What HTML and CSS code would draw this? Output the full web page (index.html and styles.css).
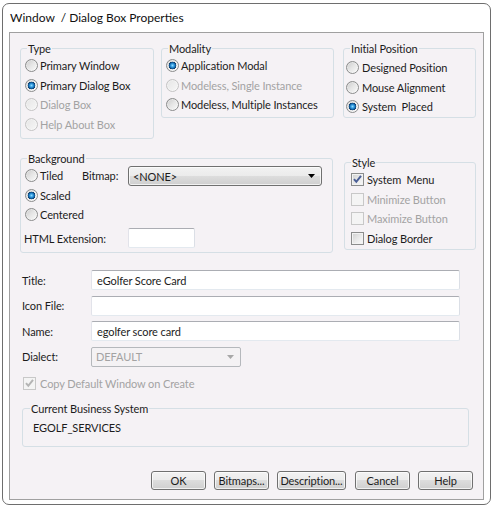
FILE: index.html
```html
<!DOCTYPE html>
<html>
<head>
<meta charset="utf-8">
<title>Window / Dialog Box Properties</title>
<link rel="stylesheet" href="styles.css">
</head>
<body>
<div class="frame">
  <div class="title">Window &nbsp;/ Dialog Box Properties</div>
  <div class="panel">
    <div class="row1">
      <fieldset class="grp grp-type">
        <legend>Type</legend>
        <div class="opt"><span class="radio"></span>Primary Window</div>
        <div class="opt"><span class="radio on"></span>Primary Dialog Box</div>
        <div class="opt dis"><span class="radio"></span>Dialog Box</div>
        <div class="opt dis"><span class="radio"></span>Help About Box</div>
      </fieldset>
      <fieldset class="grp grp-modality">
        <legend>Modality</legend>
        <div class="opt"><span class="radio on"></span>Application Modal</div>
        <div class="opt dis"><span class="radio"></span>Modeless, Single Instance</div>
        <div class="opt"><span class="radio"></span>Modeless, Multiple Instances</div>
      </fieldset>
      <fieldset class="grp grp-init">
        <legend>Initial Position</legend>
        <div class="opt"><span class="radio"></span>Designed Position</div>
        <div class="opt"><span class="radio"></span>Mouse Alignment</div>
        <div class="opt"><span class="radio on"></span>System &nbsp;Placed</div>
      </fieldset>
    </div>
    <div class="row2">
      <fieldset class="grp grp-bg">
        <legend>Background</legend>
        <div class="bg-grid">
          <div class="opt c1 r1"><span class="radio"></span>Tiled</div>
          <div class="lbl c2 r1">Bitmap:</div>
          <div class="combo c3 r1"><span class="combo-text">&lt;NONE&gt;</span><svg class="arrow" width="7" height="4" viewBox="0 0 7 4"><path d="M0 0H7L3.5 4Z"/></svg></div>
          <div class="opt c1 r2"><span class="radio on"></span>Scaled</div>
          <div class="opt c1 r3"><span class="radio"></span>Centered</div>
        </div>
        <div class="html-row">
          <span class="html-lbl">HTML Extension:</span>
          <span class="tb tb-html"></span>
        </div>
      </fieldset>
      <fieldset class="grp grp-style">
        <legend>Style</legend>
        <div class="opt"><span class="cbox"><svg class="check" width="11" height="11" viewBox="0 0 11 11"><path d="M2 5.2L4.3 7.8L9 1.8"/></svg></span>System &nbsp;Menu</div>
        <div class="opt dis"><span class="cbox"></span>Minimize Button</div>
        <div class="opt dis"><span class="cbox"></span>Maximize Button</div>
        <div class="opt"><span class="cbox"></span>Dialog Border</div>
      </fieldset>
    </div>
    <div class="form">
      <div class="frow"><span class="flbl">Title:</span><span class="tb tb-wide">eGolfer Score Card</span></div>
      <div class="frow"><span class="flbl">Icon File:</span><span class="tb tb-wide"></span></div>
      <div class="frow"><span class="flbl">Name:</span><span class="tb tb-wide">egolfer score card</span></div>
      <div class="frow"><span class="flbl">Dialect:</span><span class="dsel"><span>DEFAULT</span><svg class="arrow" width="7" height="4" viewBox="0 0 7 4"><path d="M0 0H7L3.5 4Z"/></svg></span></div>
    </div>
    <div class="copy-row dis"><span class="cbox"><svg class="check" width="11" height="11" viewBox="0 0 11 11"><path d="M2 5.2L4.3 7.8L9 1.8"/></svg></span>Copy Default Window on Create</div>
    <fieldset class="grp grp-cbs">
      <legend>Current Business System</legend>
      <div class="cbs-text">EGOLF_SERVICES</div>
    </fieldset>
    <div class="buttons">
      <span class="btn">OK</span>
      <span class="btn">Bitmaps...</span>
      <span class="btn btn-desc">Description...</span>
      <span class="btn btn-cancel">Cancel</span>
      <span class="btn">Help</span>
    </div>
  </div>
</div>
</body>
</html>
```
FILE: styles.css
```css
* { box-sizing: border-box; }
body {
  margin: 0;
  background: #fff;
  font-family: "Lato", "Liberation Sans", sans-serif;
  font-size: 11px;
  letter-spacing: -0.1px;
  color: #1c1c1c;
}
.frame {
  margin: 3px 0 0 2px;
  width: 489px;
  height: 502px;
  border: 1px solid #6e6e6e;
  border-radius: 7px;
  background: #fff;
  display: flex;
  flex-direction: column;
}
.title {
  flex: none;
  height: 28px;
  line-height: 28px;
  padding-left: 7px;
  font-size: 12px;
  letter-spacing: 0;
  color: #111;
}
.panel {
  flex: none;
  margin: 0 6px;
  height: 468px;
  border: 1px solid #a0a0a0;
  background: #f5f2f5;
}
/* group boxes */
.grp {
  margin: 0;
  padding: 0;
  min-width: 0;
  border: 1px solid #d5dfe5;
  border-radius: 3px;
}
.grp legend {
  padding: 0 1px;
  height: 15px;
  line-height: 15px;
  white-space: nowrap;
}
.opt {
  display: flex;
  align-items: center;
  height: 19.5px;
  white-space: nowrap;
}
.dis { color: #a3a3a3; }

/* radio */
.radio {
  flex: none;
  width: 13px;
  height: 13px;
  margin-right: 2px;
  border-radius: 50%;
  border: 1px solid #8b8c8c;
  background: linear-gradient(135deg, #c9c9c9 0%, #e4e4e4 45%, #fbfbfb 100%);
  box-shadow: inset 0 0 0 1px rgba(255,255,255,0.35);
}
.radio.on {
  background:
    radial-gradient(circle at 50% 50%, #8fdcff 0, #2c95dc 1.8px, #1466a8 2.8px, #0c3c6c 3.6px, rgba(12,60,108,0) 4.1px),
    linear-gradient(135deg, #c9c9c9 0%, #e4e4e4 45%, #fbfbfb 100%);
}
.dis .radio {
  border-color: #c4c4c4;
  background: linear-gradient(135deg, #e5e5e5, #f7f7f7);
}

/* checkbox */
.cbox {
  flex: none;
  width: 13px;
  height: 13px;
  margin-right: 3px;
  border: 1px solid #8b8c8c;
  background: linear-gradient(135deg, #cfcfcf 0%, #e8e8e8 50%, #fafafa 100%);
  box-shadow: inset 0 0 0 1px #f2f2f2;
  display: flex;
  align-items: center;
  justify-content: center;
}
.cbox .check path {
  fill: none;
  stroke: #4a5e96;
  stroke-width: 2;
}
.dis .cbox {
  border-color: #c8c8c8;
  background: #f4f4f4;
  box-shadow: none;
}
.dis .cbox .check path { stroke: #b4b4b4; }

/* row 1 */
.row1 {
  display: flex;
  align-items: flex-start;
  margin-top: 8px;
  padding-left: 10px;
}
.grp-type { width: 134px; padding: 0 0 4px 4px; }
.grp-type legend { margin-left: 2px; }
.grp-modality { width: 173px; margin-left: 7px; padding: 0 0 2px 4px; }
.grp-modality legend { margin-left: 2px; }
.grp-init { width: 133px; margin-left: 9px; padding: 2px 0 0 2px; }
.grp-init legend { margin-left: 4px; }
.grp-init .radio { margin-right: 3px; }

/* row 2 */
.row2 {
  display: flex;
  align-items: flex-start;
  margin-top: 12px;
  padding-left: 10px;
}
.grp-bg { width: 313px; padding: 0 10px 4px 4px; }
.grp-bg legend { margin-left: 2px; }
.bg-grid {
  display: grid;
  grid-template-columns: 57px 46px 194px;
  grid-template-rows: repeat(3, 19.5px);
}
.c1 { grid-column: 1; }
.c2 { grid-column: 2; }
.c3 { grid-column: 3; }
.r1 { grid-row: 1; }
.r2 { grid-row: 2; }
.r3 { grid-row: 3; }
.lbl { display: flex; align-items: center; }
.combo {
  height: 20px;
  border: 1px solid #707070;
  border-radius: 3px;
  background: linear-gradient(#f2f2f2 0%, #ebebeb 50%, #dddddd 50%, #cfcfcf 100%);
  box-shadow: inset 0 0 0 1px rgba(255,255,255,0.7);
  display: flex;
  align-items: center;
  justify-content: space-between;
  padding: 0 6px 0 4px;
}
.combo .arrow path { fill: #000; }
.html-row {
  display: flex;
  align-items: center;
  margin-top: 3.5px;
  height: 20px;
}
.html-lbl { width: 103px; margin-left: -1px; padding-left: 0; }
.tb {
  height: 20px;
  background: #fff;
  border: 1px solid;
  border-color: #abadb3 #dbdfe6 #e3e9ef #e2e3ea;
  border-radius: 2px;
  display: flex;
  align-items: center;
  padding: 0 5px;
  white-space: nowrap;
}
.tb-html { width: 67px; margin-left: 1px; }
.grp-style { width: 132px; margin-left: 11px; margin-top: 4px; padding: 0 0 1px 6px; }
.grp-style legend { margin-left: 0; }

/* form */
.form {
  display: flex;
  flex-direction: column;
  gap: 5.5px;
  margin-top: 17px;
  padding-left: 12px;
}
.frow {
  display: flex;
  align-items: center;
  height: 20px;
}
.flbl { width: 69px; }
.tb-wide { width: 369px; }
.dsel {
  width: 150px;
  height: 20px;
  border: 1px solid #b5b8bc;
  border-radius: 2px;
  background: #f4f2f4;
  color: #a3a3a3;
  display: flex;
  align-items: center;
  justify-content: space-between;
  padding: 0 6px 0 4px;
}
.dsel .arrow path { fill: #a8a8a8; }

.copy-row {
  display: flex;
  align-items: center;
  height: 19px;
  margin-top: 7px;
  padding-left: 13px;
}
.copy-row .cbox { margin-right: 4px; }

.grp-cbs {
  width: 447px;
  margin: 8px 0 0 12px;
  padding: 2px 0 9px 10px;
}
.grp-cbs legend { margin-left: -3px; }
.cbs-text { height: 19.5px; line-height: 19.5px; }

/* buttons */
.buttons {
  display: flex;
  gap: 8px;
  margin-top: 24px;
  padding-left: 141px;
}
.btn {
  width: 55px;
  height: 19px;
  border: 1px solid #707070;
  border-radius: 3px;
  background: linear-gradient(#f2f2f2 0%, #ebebeb 50%, #dddddd 50%, #cfcfcf 100%);
  box-shadow: inset 0 0 0 1px rgba(255,255,255,0.7);
  display: flex;
  align-items: center;
  justify-content: center;
  white-space: nowrap;
}
.btn-desc { width: 69px; }
.btn-cancel { margin-left: 1px; }
```
